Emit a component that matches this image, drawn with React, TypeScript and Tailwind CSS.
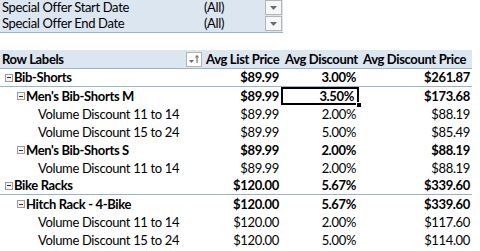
import React from "react";

type Row = {
  level: 1 | 2 | 3;
  label: string;
  price: string;
  disc: string;
  dprice: string;
  selected?: boolean;
};

const rows: Row[] = [
  { level: 1, label: "Bib-Shorts", price: "$89.99", disc: "3.00%", dprice: "$261.87" },
  { level: 2, label: "Men's Bib-Shorts M", price: "$89.99", disc: "3.50%", dprice: "$173.68", selected: true },
  { level: 3, label: "Volume Discount 11 to 14", price: "$89.99", disc: "2.00%", dprice: "$88.19" },
  { level: 3, label: "Volume Discount 15 to 24", price: "$89.99", disc: "5.00%", dprice: "$85.49" },
  { level: 2, label: "Men's Bib-Shorts S", price: "$89.99", disc: "2.00%", dprice: "$88.19" },
  { level: 3, label: "Volume Discount 11 to 14", price: "$89.99", disc: "2.00%", dprice: "$88.19" },
  { level: 1, label: "Bike Racks", price: "$120.00", disc: "5.67%", dprice: "$339.60" },
  { level: 2, label: "Hitch Rack - 4-Bike", price: "$120.00", disc: "5.67%", dprice: "$339.60" },
  { level: 3, label: "Volume Discount 11 to 14", price: "$120.00", disc: "2.00%", dprice: "$117.60" },
  { level: 3, label: "Volume Discount 15 to 24", price: "$120.00", disc: "5.00%", dprice: "$114.00" },
];

function Collapse() {
  return (
    <span className="mr-[1px] flex h-[8px] w-[8px] items-center justify-center border border-[#9a9a9a] bg-[#f4f4f4]">
      <span className="h-px w-[4px] bg-[#333]" />
    </span>
  );
}

function DropButton() {
  return (
    <div className="flex h-[15px] w-[17px] items-center justify-center border border-[#b4b4b4] bg-[#f7f7f7]">
      <svg width="7" height="4" viewBox="0 0 7 4">
        <path d="M0 0h7L3.5 4z" fill="#6d6d6d" />
      </svg>
    </div>
  );
}

export default function App() {
  return (
    <div className="h-[251px] w-[480px] overflow-hidden bg-white text-[13px] leading-none tracking-[-0.35px] text-black [font-family:Lato,'Liberation_Sans',sans-serif]">
      <div className="w-[283px] border-b border-[#95b3d7] bg-[#dce6f1]">
        <div className="flex h-[15px] items-start">
          <span className="w-[204px] pl-[2px] pt-[1px]">Special Offer Start Date</span>
          <span className="w-[61px] pt-[1px]">(All)</span>
          <DropButton />
        </div>
        <div className="flex h-[17px] items-center">
          <span className="w-[204px] pl-[2px]">Special Offer End Date</span>
          <span className="w-[61px]">(All)</span>
          <DropButton />
        </div>
      </div>

      <div className="mt-[17px] w-[472px] whitespace-nowrap">
        <div className="grid h-[19px] grid-cols-[204px_77px_78px_113px] items-center border-b border-[#95b3d7] bg-[#dce6f1] font-bold">
          <div className="flex items-center justify-between pl-[2px] pr-[2px]">
            <span>Row Labels</span>
            <span className="flex h-[15px] w-[16px] items-center justify-center border border-[#b4b4b4] bg-white">
              <svg width="12" height="10" viewBox="0 0 12 10">
                <path d="M1 6h5L3.5 9z" fill="#6d6d6d" />
                <path d="M9 9V2M7.5 3.5L9 1.5l1.5 2" stroke="#555" strokeWidth="1" fill="none" />
              </svg>
            </span>
          </div>
          <div className="pl-[2px]">Avg List Price</div>
          <div className="pl-[4px]">Avg Discount</div>
          <div className="pl-[4px]">Avg Discount Price</div>
        </div>

        {rows.map((r, i) => (
          <div
            key={i}
            className={
              "grid h-[18px] grid-cols-[204px_77px_78px_113px] items-center " +
              (r.level < 3 ? "font-bold " : "") +
              (r.level === 1 ? "border-b border-[#95b3d7]" : "")
            }
          >
            <div
              className={
                "flex items-center " +
                (r.level === 1 ? "pl-[5px]" : r.level === 2 ? "pl-[17px]" : "pl-[38px]")
              }
            >
              {r.level < 3 && <Collapse />}
              <span>{r.label}</span>
            </div>
            <div className="pr-[2px] text-right">{r.price}</div>
            <div className="relative h-full">
              <div
                className={
                  "flex h-full items-center justify-end pr-[3px] " +
                  (r.selected ? "border-2 border-black" : "")
                }
              >
                {r.disc}
              </div>
              {r.selected && (
                <span className="absolute -bottom-[3px] -right-[3px] h-[6px] w-[6px] border border-white bg-black" />
              )}
            </div>
            <div className="pr-[2px] text-right">{r.dprice}</div>
          </div>
        ))}
      </div>
    </div>
  );
}
